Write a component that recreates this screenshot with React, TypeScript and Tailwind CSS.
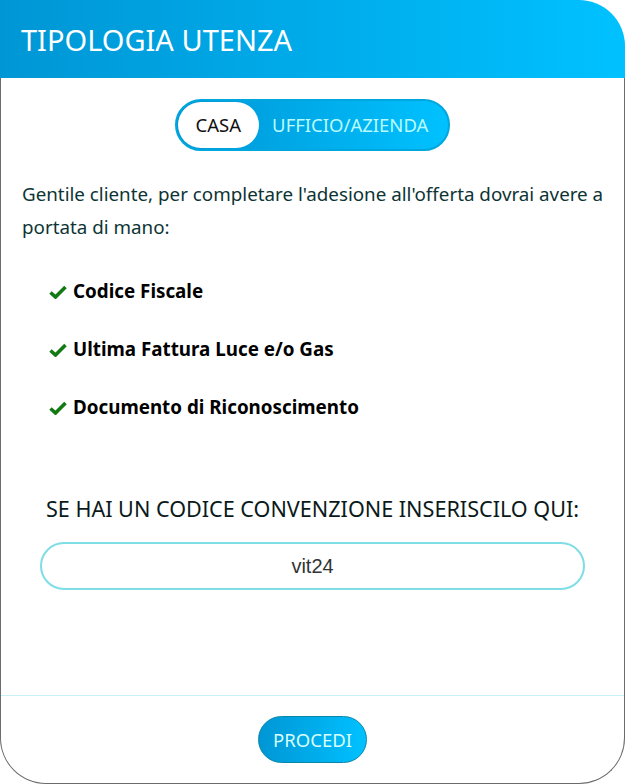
const Check = () => (
  <svg width="18" height="14" viewBox="0 0 18 14" className="shrink-0">
    <path d="M1.5 7.5 L6.5 12 L16.5 2" fill="none" stroke="#137a13" strokeWidth="3.6" strokeLinejoin="miter" />
  </svg>
);

const App = () => {
  const docs = ["Codice Fiscale", "Ultima Fattura Luce e/o Gas", "Documento di Riconoscimento"];

  return (
    <div className="w-[625px] h-[784px] flex flex-col bg-white" style={{ fontFamily: '"Noto Sans", "Open Sans", sans-serif' }}>
      <div className="h-[78px] shrink-0 flex items-center px-[21px] rounded-tr-[46px] bg-gradient-to-r from-[#0096d5] to-[#00c1ff]">
        <h1 className="text-white text-[29px] leading-none">TIPOLOGIA UTENZA</h1>
      </div>

      <div className="flex-1 flex flex-col border-x border-b border-[#6b6b6b] rounded-b-[46px]">
        <div className="flex justify-center pt-[21px]">
          <div className="flex items-center p-[1px] h-[52px] rounded-full border-2 border-[#00a6de] bg-gradient-to-r from-[#0096d5] to-[#00c1ff]">
            <button className="h-[46px] px-[18px] rounded-full bg-white text-[#111] text-[18.5px]">CASA</button>
            <button className="h-[46px] pl-[13px] pr-[19px] text-[#b8fbff] text-[18.5px]">UFFICIO/AZIENDA</button>
          </div>
        </div>

        <p className="mt-[27px] pl-[21px] pr-[8px] text-[18.8px] leading-[33px] text-[#0d3434]">
          Gentile cliente, per completare l'adesione all'offerta dovrai avere a portata di mano:
        </p>

        <ul className="mt-[35px] pl-[48px] flex flex-col gap-[33px]">
          {docs.map((d) => (
            <li key={d} className="flex items-center gap-[6px] h-[25px]">
              <Check />
              <span className="text-[18.8px] font-bold text-black">{d}</span>
            </li>
          ))}
        </ul>

        <h2 className="mt-[73px] text-center text-[21.6px] text-[#0a1a1a]">
          SE HAI UN CODICE CONVENZIONE INSERISCILO QUI:
        </h2>

        <div className="mt-[17px] px-[39px]">
          <input
            defaultValue="vit24"
            className="w-full h-[48px] rounded-[24px] border-2 border-[#7fdde5] text-center text-[20px] text-[#333] outline-none"
            style={{ fontFamily: '"Liberation Sans", Arial, sans-serif' }}
          />
        </div>

        <div className="mt-auto border-t border-[#c9f0f4] flex justify-center pt-[20px] pb-[20px]">
          <button className="h-[47px] px-[14px] rounded-full border border-[#0a86a8] bg-gradient-to-r from-[#0096d5] to-[#00c1ff] text-[#d8ffff] text-[18.5px]">
            PROCEDI
          </button>
        </div>
      </div>
    </div>
  );
};

export default App;
